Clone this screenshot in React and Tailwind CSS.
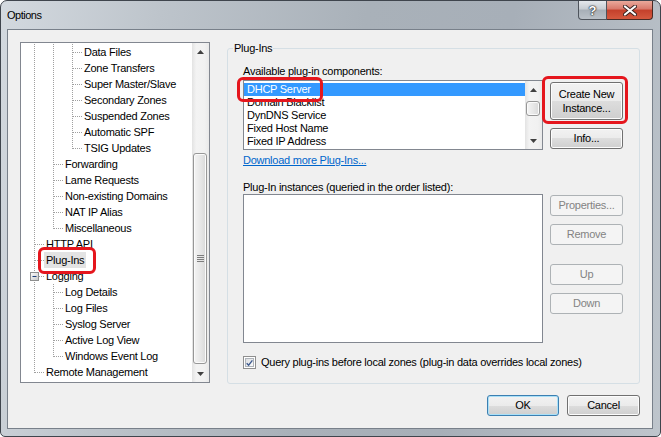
import React from 'react';

const font = "font-['Liberation_Sans',Arial,sans-serif] text-[11px] tracking-[-0.25px]";

const treeRows = [
  { label: 'Data Files', cols: ['pipe', 'pipe', 'tee'] },
  { label: 'Zone Transfers', cols: ['pipe', 'pipe', 'tee'] },
  { label: 'Super Master/Slave', cols: ['pipe', 'pipe', 'tee'] },
  { label: 'Secondary Zones', cols: ['pipe', 'pipe', 'tee'] },
  { label: 'Suspended Zones', cols: ['pipe', 'pipe', 'tee'] },
  { label: 'Automatic SPF', cols: ['pipe', 'pipe', 'tee'] },
  { label: 'TSIG Updates', cols: ['pipe', 'pipe', 'corner'] },
  { label: 'Forwarding', cols: ['pipe', 'tee'] },
  { label: 'Lame Requests', cols: ['pipe', 'tee'] },
  { label: 'Non-existing Domains', cols: ['pipe', 'tee'] },
  { label: 'NAT IP Alias', cols: ['pipe', 'tee'] },
  { label: 'Miscellaneous', cols: ['pipe', 'corner'] },
  { label: 'HTTP API', cols: ['tee'] },
  { label: 'Plug-Ins', cols: ['tee'], selected: true },
  { label: 'Logging', cols: ['tee'], minus: true },
  { label: 'Log Details', cols: ['pipe', 'tee'] },
  { label: 'Log Files', cols: ['pipe', 'tee'] },
  { label: 'Syslog Server', cols: ['pipe', 'tee'] },
  { label: 'Active Log View', cols: ['pipe', 'tee'] },
  { label: 'Windows Event Log', cols: ['pipe', 'corner'] },
  { label: 'Remote Management', cols: ['corner'] },
];

const plugins = ['DHCP Server', 'Domain Blacklist', 'DynDNS Service', 'Fixed Host Name', 'Fixed IP Address'];

function TreeCell({ type, minus }) {
  const dot = { stroke: '#a0a0a0', strokeWidth: 1, strokeDasharray: '1 1' };
  return (
    <svg width="19" height="16" className="block shrink-0">
      {type !== 'corner' && <line x1="9.5" y1="0" x2="9.5" y2="16" {...dot} />}
      {type === 'corner' && <line x1="9.5" y1="0" x2="9.5" y2="9" {...dot} />}
      {type !== 'pipe' && <line x1="10" y1="8.5" x2="19" y2="8.5" {...dot} />}
      {minus && (
        <g>
          <defs>
            <linearGradient id="mbox" x1="0" y1="0" x2="1" y2="1">
              <stop offset="0" stopColor="#ffffff" />
              <stop offset="1" stopColor="#c6c6c6" />
            </linearGradient>
          </defs>
          <rect x="5.5" y="4.5" width="8" height="8" fill="url(#mbox)" stroke="#8e8f8f" />
          <line x1="7.5" y1="8.5" x2="11.5" y2="8.5" stroke="#1e3f7a" />
        </g>
      )}
    </svg>
  );
}

function Arrow({ up }) {
  return (
    <svg width="7" height="4" viewBox="0 0 7 4" className="block">
      <path d={up ? 'M3.5 0 L7 4 L0 4 Z' : 'M0 0 L7 0 L3.5 4 Z'} fill="#404040" />
    </svg>
  );
}

function VScroll({ thumb, grip }) {
  return (
    <div className="w-[17px] shrink-0 flex flex-col bg-[linear-gradient(90deg,#e3e3e3,#f3f3f3_25%,#f1f1f1_75%,#e9e9e9)]">
      <div className="h-[17px] flex items-center justify-center">
        <Arrow up />
      </div>
      <div className="flex-1 flex flex-col">
        <div
          className={`${thumb} w-[14px] ml-[1px] rounded-[3px] border border-[#979797] bg-[linear-gradient(90deg,#f4f4f4,#e8e8e8_50%,#d9d9d9)] shadow-[inset_0_0_0_1px_#fbfbfb] flex flex-col items-center justify-center gap-[1px]`}
        >
          {grip && (
            <>
              <div className="w-[7px] h-[1px] bg-[#7d7d7d]" />
              <div className="w-[7px] h-[1px] bg-[#7d7d7d]" />
              <div className="w-[7px] h-[1px] bg-[#7d7d7d]" />
              <div className="w-[7px] h-[1px] bg-[#7d7d7d]" />
            </>
          )}
        </div>
      </div>
      <div className="h-[17px] flex items-center justify-center">
        <Arrow />
      </div>
    </div>
  );
}

function Button({ children, className = '', disabled, isDefault }) {
  let look =
    'border-[#707070] bg-[linear-gradient(#f2f2f2_0%,#ebebeb_50%,#dddddd_50%,#cfcfcf_100%)] shadow-[inset_0_0_0_1px_#fcfcfc] text-black';
  if (disabled) look = 'border-[#adb2b5] bg-[#f4f4f4] text-[#838383]';
  if (isDefault)
    look =
      'border-[#3c7fb1] bg-[linear-gradient(#f2f2f2_0%,#ebebeb_50%,#dddddd_50%,#cfcfcf_100%)] shadow-[inset_0_0_0_1px_#a9e0f8] text-black';
  return (
    <div className={`rounded-[3px] border flex items-center justify-center text-center ${look} ${className}`}>
      {children}
    </div>
  );
}

function Tree() {
  return (
    <div className="w-[190px] h-[341px] shrink-0 border border-[#828790] bg-white flex">
      <div className="flex-1 pt-[1px] pl-[4px] overflow-hidden">
        {treeRows.map((r) => (
          <div key={r.label} className="flex h-[16px] items-center">
            {r.cols.map((c, i) => (
              <TreeCell key={i} type={c} minus={r.minus && i === r.cols.length - 1} />
            ))}
            <span className={`px-[2px] leading-[16px] whitespace-nowrap ${r.selected ? 'bg-[#e3e3e3]' : ''}`}>
              {r.label}
            </span>
          </div>
        ))}
      </div>
      <VScroll thumb="mt-[93px] h-[211px]" grip />
    </div>
  );
}

function PluginGroup() {
  return (
    <div className="ml-[17px] mt-[6px] w-[413px] shrink-0 self-start border border-[#d5dfe5] rounded-[3px] pb-[14px]">
      <div className="-mt-[7px] ml-[5px] px-[1px] w-fit bg-[#f0f0f0] leading-[13px]">Plug-Ins</div>
      <div className="flex pl-[15px]">
        <div className="w-[300px] shrink-0 flex flex-col">
          <div className="mt-[10px] leading-[13px]">Available plug-in components:</div>
          <div className="mt-[2px] h-[70px] border border-[#828790] bg-white flex">
            <div className="flex-1 pt-[2px] overflow-hidden">
              {plugins.map((p, i) => (
                <div
                  key={p}
                  className={`h-[13px] leading-[13px] pl-[3px] whitespace-nowrap ${i === 0 ? 'bg-[#3399ff] text-white' : ''}`}
                >
                  {p}
                </div>
              ))}
            </div>
            <VScroll thumb="mt-[3px] h-[15px]" />
          </div>
          <div className="mt-[4px] leading-[13px] text-[#0066cc] underline w-fit">Download more Plug-Ins...</div>
          <div className="mt-[14px] leading-[13px]">Plug-In instances (queried in the order listed):</div>
          <div className="h-[149px] border border-[#828790] bg-white" />
        </div>
        <div className="ml-[7px] w-[73px] shrink-0 flex flex-col">
          <Button className="mt-[27px] h-[38px] leading-[14px]">
            Create New
            <br />
            Instance...
          </Button>
          <Button className="mt-[8px] h-[21px]">Info...</Button>
          <Button className="mt-[46px] h-[21px]" disabled>
            Properties...
          </Button>
          <Button className="mt-[8px] h-[21px]" disabled>
            Remove
          </Button>
          <Button className="mt-[19px] h-[21px]" disabled>
            Up
          </Button>
          <Button className="mt-[8px] h-[21px]" disabled>
            Down
          </Button>
        </div>
      </div>
      <div className="flex items-center pl-[15px] mt-[13px]">
        <div className="w-[13px] h-[13px] border border-[#8f8f8f] bg-white p-[1px]">
          <div className="w-full h-full border border-[#aeb3b9] bg-[linear-gradient(135deg,#dcdee1,#fbfbfb)] flex items-center justify-center">
            <svg width="8" height="8" viewBox="0 0 8 8" className="block">
              <path d="M0.8 4.2 L3 6.5 L7.3 1" fill="none" stroke="#3d5a8f" strokeWidth="1.6" />
            </svg>
          </div>
        </div>
        <span className="ml-[5px] leading-[13px]">
          Query plug-ins before local zones (plug-in data overrides local zones)
        </span>
      </div>
    </div>
  );
}

export default function App() {
  return (
    <div
      className={`${font} relative w-[661px] h-[437px] rounded-t-[7px] rounded-b-[5px] border border-[#3f454d] bg-[linear-gradient(100deg,#d3d9df_0%,#bdc4cb_22%,#a9b1b9_50%,#a7afb8_70%,#bec5cc_100%)] text-black select-none`}
    >
      {/* title bar */}
      <div className="h-[28px] flex items-start justify-between">
        <div className="pl-[6px] pt-[8px] leading-[13px] tracking-[-0.5px]">Options</div>
        <div className="flex mr-[7px]">
          <div className="w-[29px] h-[19px] border border-t-0 border-[#4e545c] rounded-bl-[4px] bg-[linear-gradient(#e4e8ec_0%,#c6ccd2_45%,#a7afb7_50%,#bac1c8_100%)] flex items-center justify-center">
            <span className="text-white font-bold text-[13px] leading-[13px] tracking-normal [text-shadow:0_0_1px_#1e2226,0_0_1px_#1e2226,0_0_2px_#1e2226]">
              ?
            </span>
          </div>
          <div className="w-[46px] h-[19px] border border-t-0 border-l-0 border-[#4a2a24] rounded-br-[4px] bg-[linear-gradient(#eaa99b_0%,#d8786a_45%,#c4402b_50%,#d5593f_100%)] flex items-center justify-center">
            <svg width="14" height="11" viewBox="0 0 14 11" className="block">
              <path d="M2 1.5 L12 9.5 M12 1.5 L2 9.5" stroke="#3a2320" strokeWidth="4" strokeLinecap="round" />
              <path d="M2 1.5 L12 9.5 M12 1.5 L2 9.5" stroke="#ffffff" strokeWidth="2.2" strokeLinecap="round" />
            </svg>
          </div>
        </div>
      </div>

      {/* client area */}
      <div className="ml-[6px] w-[646px] h-[400px] border border-[#78808a] bg-[#f0f0f0] flex flex-col">
        <div className="flex pl-[12px] pt-[12px]">
          <Tree />
          <PluginGroup />
        </div>
        <div className="flex justify-end gap-[8px] pr-[12px] mt-[11px]">
          <Button className="w-[72px] h-[21px]" isDefault>
            OK
          </Button>
          <Button className="w-[73px] h-[21px]">Cancel</Button>
        </div>
      </div>

      {/* red annotation boxes */}
      <div className="absolute left-[37px] top-[246px] w-[58px] h-[27px] border-[3px] border-[#e5161d] rounded-[6px]" />
      <div className="absolute left-[236px] top-[76px] w-[86px] h-[25px] border-[3px] border-[#e5161d] rounded-[6px]" />
      <div className="absolute left-[541px] top-[75px] w-[86px] h-[48px] border-[3px] border-[#e5161d] rounded-[6px]" />
    </div>
  );
}
